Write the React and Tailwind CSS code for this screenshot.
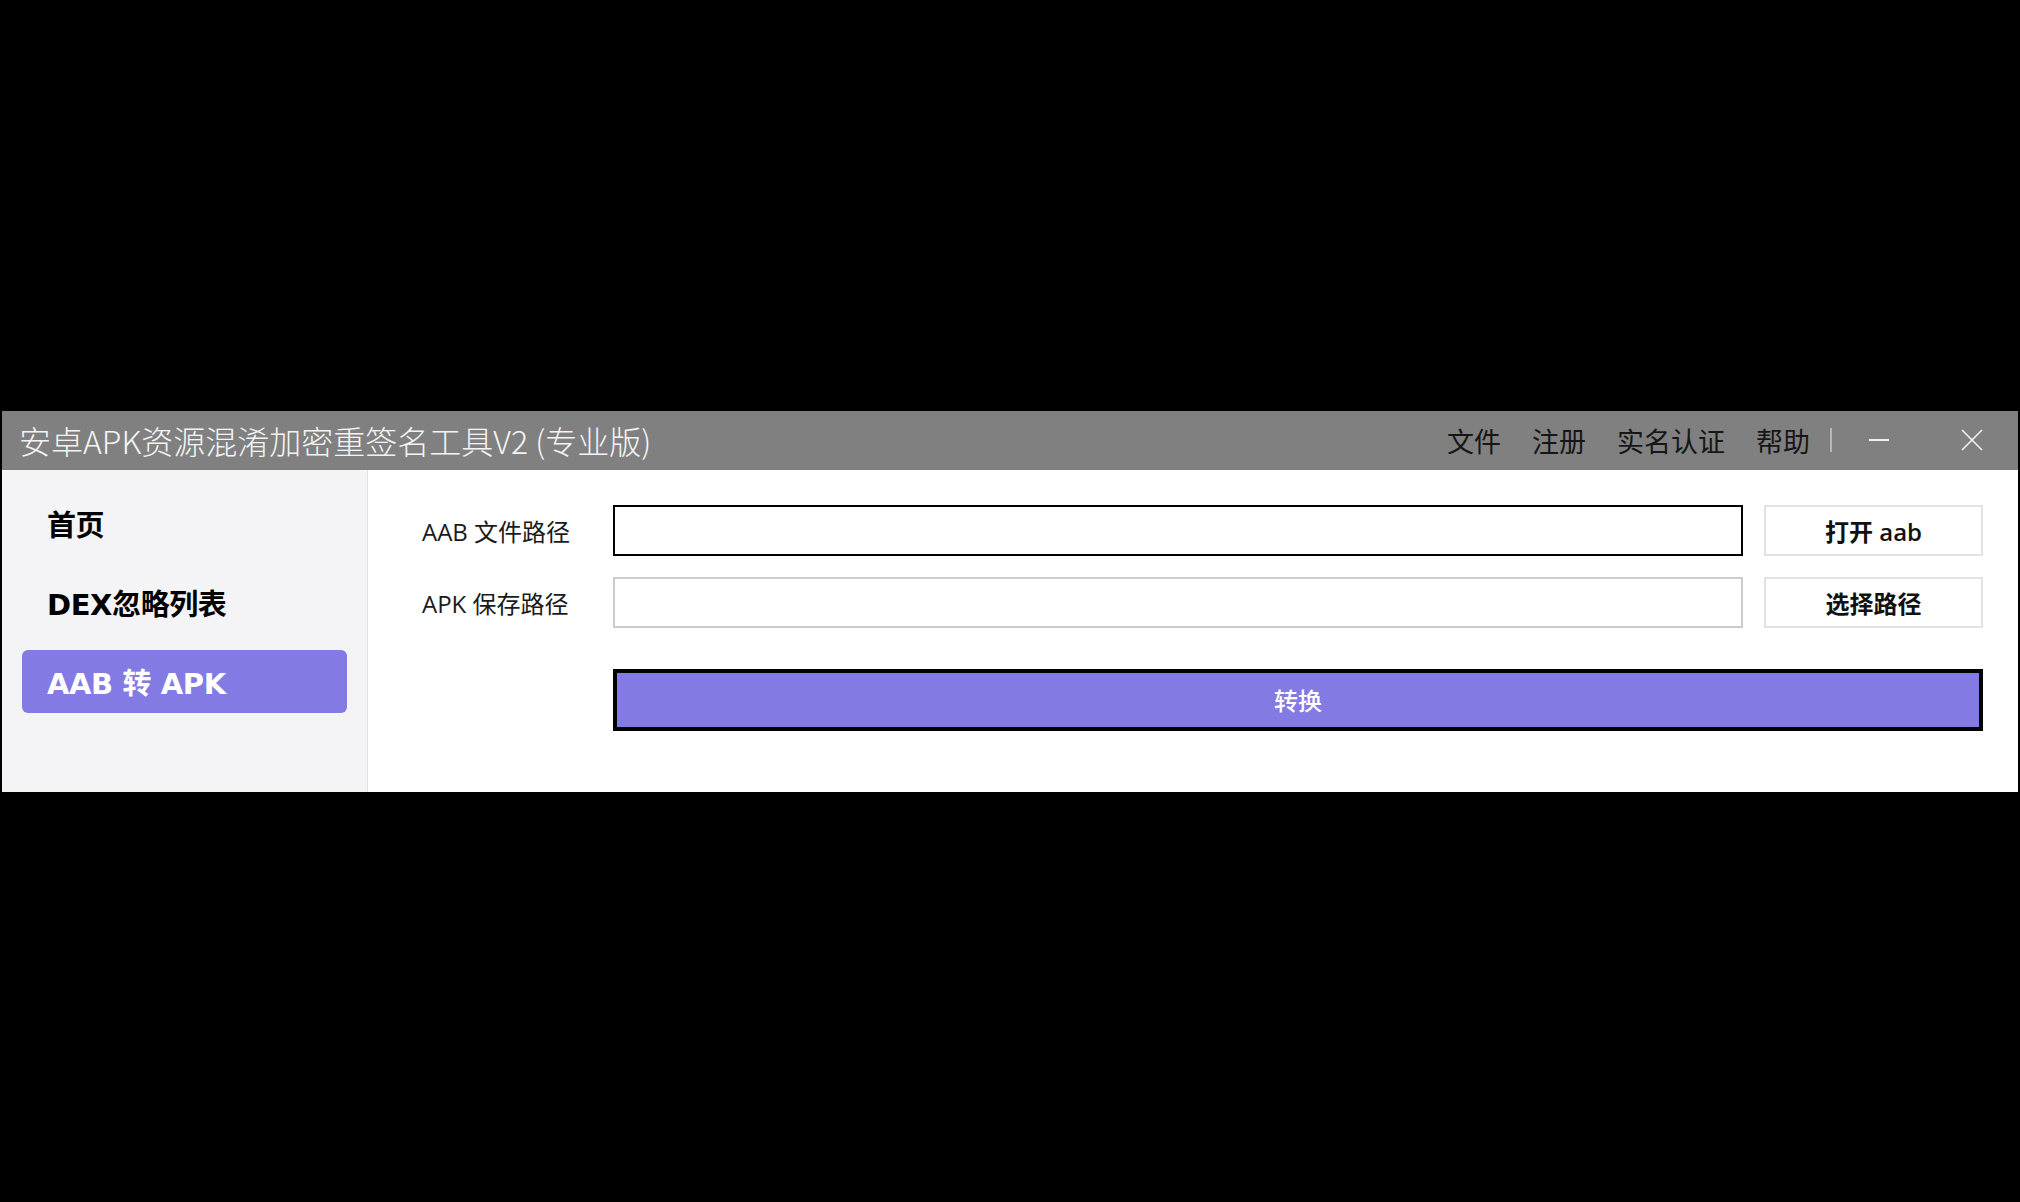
import React, { useState } from "react";

const cjk = { fontFamily: '"Noto Sans CJK SC", "Noto Sans", sans-serif' };
const mixed = { fontFamily: '"Open Sans", "Noto Sans CJK SC", sans-serif' };
const navFont = { fontFamily: '"DejaVu Sans", "Noto Sans CJK SC", sans-serif' };

const navItems = ["首页", "DEX忽略列表", "AAB 转 APK"];
const menuItems = ["文件", "注册", "实名认证", "帮助"];

function TitleBar() {
  return (
    <div className="h-[59px] shrink-0 bg-[#808080] flex items-center" style={cjk}>
      <div className="pl-[17px] text-[32px] font-light text-[#f4f4f4] leading-none whitespace-nowrap">
        安卓APK资源混淆加密重签名工具V2 (专业版)
      </div>
      <div className="ml-auto flex items-center h-full">
        <div className="flex items-center gap-[31px] text-[27px] text-[#161616] leading-none">
          {menuItems.map((m) => (
            <span key={m}>{m}</span>
          ))}
        </div>
        <div className="ml-[20px] w-[2px] h-[24px] bg-[#b8b8b8]" />
        <button className="ml-[19px] w-[56px] h-full flex items-center justify-center">
          <span className="block w-[20px] h-[2px] bg-[#f2f2f2]" />
        </button>
        <button className="ml-[35px] mr-[16px] w-[60px] h-full flex items-center justify-center">
          <svg width="22" height="22" viewBox="0 0 22 22" fill="none" stroke="#f2f2f2" strokeWidth="1.6">
            <path d="M1 1L21 21M21 1L1 21" />
          </svg>
        </button>
      </div>
    </div>
  );
}

function Sidebar({ active, onPick }) {
  return (
    <div
      className="w-[366px] shrink-0 bg-[#f4f4f6] border-r border-[#e2e2e6] pt-[22px] px-[20px] flex flex-col gap-[16px]"
      style={navFont}
    >
      {navItems.map((item, i) => (
        <div
          key={item}
          onClick={() => onPick(i)}
          className={
            i === active
              ? "h-[63px] rounded-[6px] bg-[#837ae3] text-white pl-[25px] pt-[7px] flex items-center text-[29px] font-bold leading-none tracking-[-0.4px]"
              : "h-[63px] rounded-[6px] text-black pl-[25px] pt-[7px] flex items-center text-[29px] font-bold leading-none tracking-[-0.4px]"
          }
        >
          {item}
        </div>
      ))}
    </div>
  );
}

function PathRow({ label, button, focused }) {
  return (
    <div className="flex items-center h-[51px]">
      <div className="w-[191px] shrink-0 pt-[4px] text-[24px] text-[#1a1a1a] leading-none">{label}</div>
      <input
        className={
          focused
            ? "w-[1130px] h-full border-2 border-black bg-white outline-none px-2 text-[22px]"
            : "w-[1130px] h-full border-2 border-[#cccccc] bg-white outline-none px-2 text-[22px]"
        }
      />
      <button className="ml-[21px] w-[219px] h-full pt-[3px] border-2 border-[#e2e2e2] bg-white text-[24px] font-semibold text-[#111] leading-none">
        {button}
      </button>
    </div>
  );
}

export default function App() {
  const [active, setActive] = useState(2);

  return (
    <div className="w-[2020px] h-[1202px] bg-black flex items-center justify-center" style={mixed}>
      <div className="w-[2016px] h-[381px] bg-white flex flex-col">
        <TitleBar />
        <div className="flex-1 flex min-h-0">
          <Sidebar active={active} onPick={setActive} />
          <div className="flex-1 pt-[35px] pl-[54px] pr-[35px] flex flex-col">
            <PathRow label="AAB 文件路径" button="打开 aab" focused />
            <div className="mt-[21px]">
              <PathRow label="APK 保存路径" button="选择路径" />
            </div>
            <div className="mt-[41px] ml-[191px]">
              <button className="w-[1370px] h-[62px] pt-[2px] bg-[#837ae3] border-4 border-black text-white text-[24px] font-medium leading-none">
                转换
              </button>
            </div>
          </div>
        </div>
      </div>
    </div>
  );
}
